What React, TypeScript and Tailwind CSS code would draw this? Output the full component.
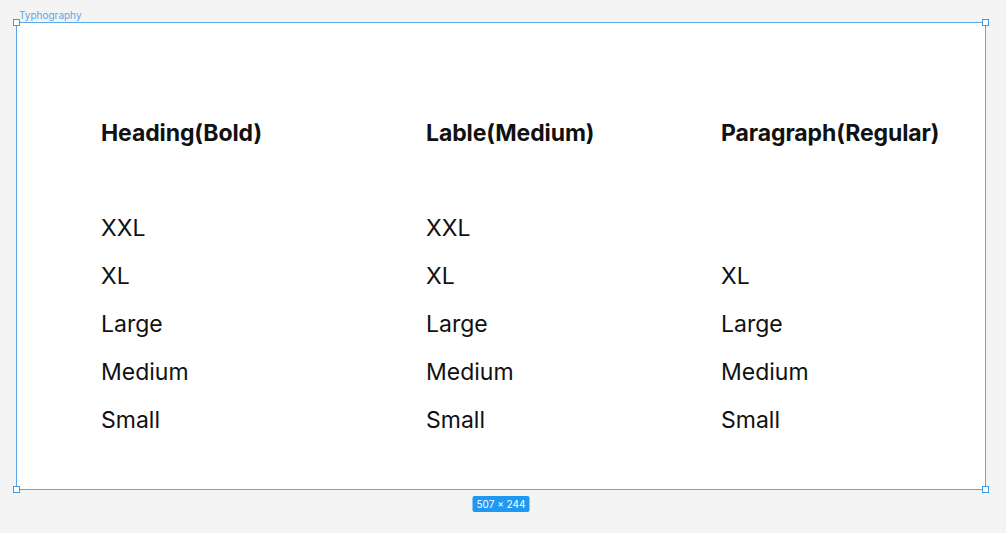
import React from 'react';

const columns = [
  { title: 'Heading(Bold)', items: ['XXL', 'XL', 'Large', 'Medium', 'Small'] },
  { title: 'Lable(Medium)', items: ['XXL', 'XL', 'Large', 'Medium', 'Small'] },
  { title: 'Paragraph(Regular)', items: ['', 'XL', 'Large', 'Medium', 'Small'] },
];

function Handle({ className }: { className: string }) {
  return <div className={`absolute w-[7px] h-[7px] bg-white border border-[#3b9be6] ${className}`} />;
}

export default function App() {
  return (
    <div className="w-[1006px] h-[533px] bg-[#f4f4f4] font-['Inter',sans-serif] text-[#111] overflow-hidden">
      <div className="pt-[9px] pb-[1px] pl-[19px] text-[10px] leading-[12px] text-[#5aa6e8]">Typhography</div>
      <div className="relative ml-[16px] w-[970px] h-[468px] bg-white border border-[#5aa9ea]">
        <Handle className="-left-[4px] -top-[4px]" />
        <Handle className="-right-[4px] -top-[4px]" />
        <Handle className="-left-[4px] -bottom-[4px]" />
        <Handle className="-right-[4px] -bottom-[4px]" />
        <div className="grid grid-cols-[325px_295px_1fr] pl-[84px] pt-[94px]">
          {columns.map((col, i) => (
            <div key={i} className="flex flex-col">
              <div className="text-[23px] leading-[32px] font-bold tracking-[-0.1px]">{col.title}</div>
              <div className="mt-[63px] flex flex-col">
                {col.items.map((it, j) => (
                  <div key={j} className="h-[48px] text-[23px] leading-[32px]">
                    {it}
                  </div>
                ))}
              </div>
            </div>
          ))}
        </div>
        <div className="absolute left-1/2 -translate-x-1/2 -bottom-[23px] bg-[#1e98f0] text-white text-[10px] leading-[16px] px-[4px] rounded-[2px]">
          507 × 244
        </div>
      </div>
    </div>
  );
}
